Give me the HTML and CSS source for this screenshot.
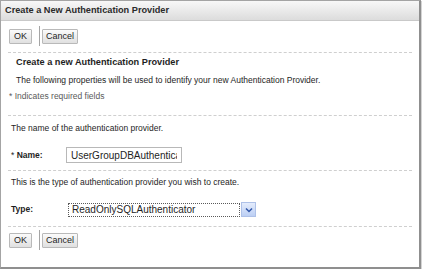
FILE: index.html
```html
<!DOCTYPE html>
<html lang="en">
<head>
    <meta charset="UTF-8">
    <title>Create a New Authentication Provider</title>
    <link rel="stylesheet" href="styles.css">
</head>
<body>
    <div class="panel">
        <div class="panel-header">Create a New Authentication Provider</div>
        <div class="panel-body">
            <div class="button-bar">
                <button class="btn btn-ok">OK</button>
                <span class="bar-sep"></span>
                <button class="btn">Cancel</button>
            </div>
            <div class="section intro">
                <h2 class="section-title">Create a new Authentication Provider</h2>
                <p class="intro-text">The following properties will be used to identify your new Authentication Provider.</p>
                <p class="required-note">* Indicates required fields</p>
            </div>
            <div class="section name-section">
                <p class="help">The name of the authentication provider.</p>
                <div class="field">
                    <label class="field-label"><span class="req">*</span> Name:</label>
                    <input class="text-input" type="text" value="UserGroupDBAuthenticator">
                </div>
            </div>
            <div class="section type-section">
                <p class="help">This is the type of authentication provider you wish to create.</p>
                <div class="field">
                    <label class="field-label">Type:</label>
                    <div class="select">
                        <span class="select-value">ReadOnlySQLAuthenticator</span>
                        <span class="select-arrow">
                            <svg width="8" height="6" viewBox="0 0 8 6"><path d="M1 1.5 L4 4.5 L7 1.5" fill="none" stroke="#3056a8" stroke-width="1.5"/></svg>
                        </span>
                    </div>
                </div>
            </div>
            <div class="button-bar bottom">
                <button class="btn btn-ok">OK</button>
                <span class="bar-sep"></span>
                <button class="btn">Cancel</button>
            </div>
        </div>
    </div>
</body>
</html>
```

FILE: styles.css
```css
* {
    margin: 0;
    padding: 0;
    box-sizing: border-box;
}

body {
    font-family: "Liberation Sans", Arial, sans-serif;
    font-size: 8.5px;
    line-height: 11px;
    color: #1e1e1e;
    background: #fff;
}

.panel {
    width: 421px;
    height: 269px;
    border: 1px solid #a4a4a4;
    border-right: 2px solid #8f8f8f;
    border-bottom: 2px solid #8f8f8f;
    box-shadow: 1px 1px 0 #d4d4d4;
    background: #fff;
}

.panel-header {
    height: 20px;
    padding: 4px 0 0 4px;
    font-weight: bold;
    font-size: 9.2px;
    color: #2a2a2a;
    background: linear-gradient(#f8f8f8, #dcdcdc);
    border-bottom: 1px solid #c9c9c9;
}

.panel-body {
    padding: 0 7px;
}

.button-bar {
    display: flex;
    align-items: center;
    height: 32px;
    padding: 5px 0 6px 1px;
    border-bottom: 1px dashed #cfcfcf;
}

.button-bar.bottom {
    height: 26px;
    padding-top: 3px;
    padding-bottom: 3px;
    border-bottom: none;
}

.btn {
    font-family: inherit;
    font-size: 9px;
    height: 15px;
    width: 36px;
    background: linear-gradient(#fbfbfb, #e0e0e0);
    border: 1px solid #b9b9b9;
    border-radius: 1px;
    color: #1e1e1e;
}

.btn-ok {
    width: 23px;
}

.bar-sep {
    width: 1px;
    height: 20px;
    margin: 0 2px 0 7px;
    background: #a5a5a5;
}

.section {
    border-bottom: 1px dashed #cfcfcf;
}

.intro {
    padding: 4px 0 13px;
}

.section-title {
    font-size: 9.2px;
    line-height: 11px;
    font-weight: bold;
    margin-left: 8px;
}

.intro-text {
    margin: 7px 0 0 8px;
}

.required-note {
    margin: 5px 0 0 1px;
    color: #5a5a5a;
}

.help {
    margin-left: 3px;
}

.name-section {
    padding: 7px 0 7px;
}

.type-section {
    padding: 6px 0 9px;
}

.field {
    display: flex;
    align-items: center;
    margin: 13px 0 0 3px;
}

.type-section .field {
    margin-top: 14px;
}

.field-label {
    width: 55px;
    font-weight: bold;
}

.req {
    font-weight: normal;
}

.text-input {
    width: 116px;
    height: 16px;
    padding: 0 4px;
    font-family: inherit;
    font-size: 10px;
    border: 1px solid #b8b8b8;
    color: #1e1e1e;
}

.select {
    display: flex;
    align-items: center;
    margin-left: 2px;
}

.select-value {
    width: 172px;
    height: 14px;
    padding: 0 3px;
    font-size: 10px;
    line-height: 12px;
    border: 1px dotted #5a5a5a;
}

.select-arrow {
    width: 15px;
    height: 15px;
    margin-left: 1px;
    display: flex;
    align-items: center;
    justify-content: center;
    background: linear-gradient(#e4ecfc, #bccff4);
    border: 1px solid #aec1e8;
}
```
